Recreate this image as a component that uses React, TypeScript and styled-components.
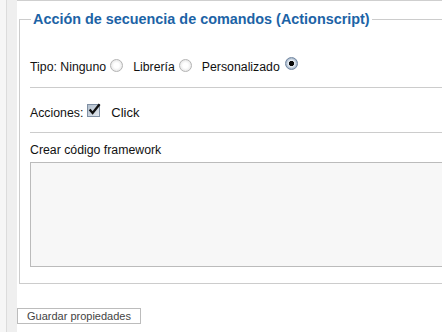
import styled, { createGlobalStyle } from 'styled-components';

const GlobalStyle = createGlobalStyle`
  html, body {
    margin: 0;
    padding: 0;
    background: #fff;
    overflow: hidden;
  }
  body {
    font-family: 'Liberation Sans', Arial, sans-serif;
    color: #111;
  }
`;

const tipos = [
  { label: 'Ninguno', checked: false },
  { label: 'Librería', checked: false },
  { label: 'Personalizado', checked: true },
];

const App = () => {
  return (
    <Page>
      <GlobalStyle />
      <Sidebar>
        <Rail />
      </Sidebar>
      <Main>
        <Fieldset>
          <Legend>Acción de secuencia de comandos (Actionscript)</Legend>
          <Row $top={29} $bottom={10}>
            <Text>Tipo:&nbsp;</Text>
            {tipos.map((t) => (
              <Option key={t.label}>
                <Text>{t.label}</Text>
                <Radio type="radio" name="tipo" defaultChecked={t.checked} $checked={t.checked} />
              </Option>
            ))}
          </Row>
          <Row $top={15} $bottom={9}>
            <Text>Acciones:</Text>
            <CheckBox>
              <svg width="14" height="14" viewBox="0 0 14 14">
                <defs>
                  <linearGradient id="cb" x1="0" y1="0" x2="1" y2="1">
                    <stop offset="0" stopColor="#aebccb" />
                    <stop offset="1" stopColor="#e4e9ef" />
                  </linearGradient>
                </defs>
                <rect x="0.5" y="1.5" width="12" height="12" fill="url(#cb)" stroke="#7f8fa3" />
                <path d="M2.6 6.6 L5.6 10 L12.6 1.2" fill="none" stroke="#111" strokeWidth="2.3" />
              </svg>
            </CheckBox>
            <ClickText>Click</ClickText>
          </Row>
          <Label>Crear código framework</Label>
          <CodeArea />
        </Fieldset>
        <SaveButton type="button">Guardar propiedades</SaveButton>
      </Main>
    </Page>
  );
};

const Page = styled.div`
  display: flex;
  width: 442px;
  height: 332px;
  overflow: hidden;
`;

const Sidebar = styled.div`
  width: 11px;
  padding-left: 6px;
  background: #f6f6f6;
  flex-shrink: 0;
`;

const Rail = styled.div`
  height: 100%;
  border-left: 1px solid #dcdcdc;
  background: #efefef;
`;

const Main = styled.div`
  flex: 1;
  min-width: 0;
  border-top: 1px solid #cfcfcf;
  overflow: hidden;
`;

const Fieldset = styled.fieldset`
  width: 640px;
  margin: 10px 0 0 2px;
  padding: 0 10px 16px 10px;
  border: 1px solid #cccccc;
  box-sizing: border-box;
`;

const Legend = styled.legend`
  margin-left: 1px;
  padding: 0 2px;
  font-size: 14.4px;
  line-height: 17px;
  font-weight: bold;
  color: #1c63a6;
`;

const Row = styled.div<{ $top: number; $bottom: number }>`
  display: flex;
  align-items: center;
  height: 20px;
  padding: ${(p) => p.$top}px 0 ${(p) => p.$bottom}px;
  border-bottom: 1px solid #cccccc;
`;

const Text = styled.span`
  font-size: 12.3px;
  line-height: 20px;
  white-space: pre;
`;

const Option = styled.span`
  display: flex;
  align-items: center;
`;

const Radio = styled.input<{ $checked: boolean }>`
  appearance: none;
  width: 13px;
  height: 13px;
  margin: 0 10px ${(p) => (p.$checked ? 7 : 3)}px ${(p) => (p.$checked ? 5 : 4)}px;
  border-radius: 50%;
  box-sizing: border-box;
  border: 1px solid ${(p) => (p.$checked ? '#7388a2' : '#b4b4b4')};
  background: ${(p) =>
    p.$checked
      ? 'radial-gradient(circle, #0a0a0a 0 2.4px, #e4eaf1 2.9px 3.3px, #a3b4c7 5.5px)'
      : 'radial-gradient(circle, #ffffff 0 2.5px, #e6e6e6 6px)'};
`;

const CheckBox = styled.span`
  display: flex;
  width: 14px;
  height: 14px;
  margin: 0 10px 6px 4px;
`;

const ClickText = styled.span`
  font-size: 13px;
  line-height: 20px;
`;

const Label = styled.div`
  padding-top: 7px;
  font-size: 12.3px;
  line-height: 20px;
`;

const CodeArea = styled.textarea`
  display: block;
  width: 100%;
  height: 105px;
  margin: 2px 0 0;
  padding: 0;
  box-sizing: border-box;
  border: 1px solid #bbbbbb;
  background: #f7f7f7;
  resize: none;
  outline: none;
`;

const SaveButton = styled.button`
  display: block;
  margin-top: 24px;
  height: 16px;
  padding: 0 9px;
  border: 1px solid #bcbcbc;
  background: #fff;
  font-family: 'Liberation Sans', Arial, sans-serif;
  font-size: 11px;
  line-height: 14px;
  color: #444;
  border-radius: 0;
`;

export default App;
